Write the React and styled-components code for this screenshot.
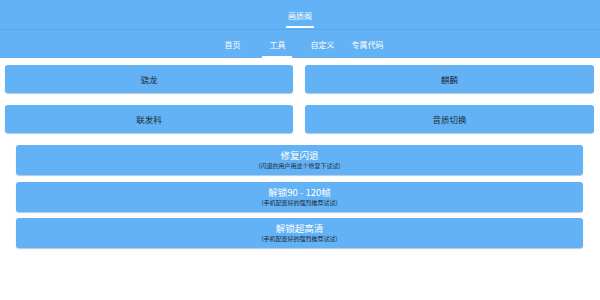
import styled, { createGlobalStyle } from "styled-components";

const GlobalStyle = createGlobalStyle`
  body {
    margin: 0;
    background: #ffffff;
    font-family: "Noto Sans CJK SC", "Noto Sans", Roboto, sans-serif;
  }
`;

const tabs = ["首页", "工具", "自定义", "专属代码"];

const topButtons = ["骁龙", "麒麟", "联发科", "音质切换"];

const tools = [
  { title: "修复闪退", note: "(闪退的用户用这个修复下试试)" },
  { title: "解锁90 - 120帧", note: "(手机配置好的强烈推荐试试)" },
  { title: "解锁超高清", note: "(手机配置好的强烈推荐试试)" },
];

function App() {
  return (
    <Page>
      <GlobalStyle />
      <Header>
        <TitleBar>
          <Title>画质阁</Title>
        </TitleBar>
        <TabBar>
          {tabs.map((t) => (
            <Tab key={t} $active={t === "工具"}>
              {t}
            </Tab>
          ))}
        </TabBar>
      </Header>

      <Grid>
        {topButtons.map((b) => (
          <SmallButton key={b}>{b}</SmallButton>
        ))}
      </Grid>

      <List>
        {tools.map((item) => (
          <WideButton key={item.title}>
            <WideTitle>{item.title}</WideTitle>
            <WideNote>{item.note}</WideNote>
          </WideButton>
        ))}
      </List>
    </Page>
  );
}

const Page = styled.div`
  width: 600px;
  height: 300px;
  background: #ffffff;
  overflow: hidden;
`;

const Header = styled.div`
  background: #62b2f5;
`;

const TitleBar = styled.div`
  height: 29px;
  display: flex;
  justify-content: center;
  align-items: flex-end;
  border-bottom: 1px solid #58a7e8;
`;

const Title = styled.div`
  color: #ffffff;
  font-size: 8px;
  line-height: 12px;
  padding-bottom: 7px;
  position: relative;
  &::after {
    content: "";
    position: absolute;
    left: 50%;
    bottom: 1px;
    width: 28px;
    margin-left: -14px;
    height: 2px;
    background: #ffffff;
  }
`;

const TabBar = styled.div`
  height: 28px;
  display: flex;
  justify-content: center;
`;

const Tab = styled.div`
  width: 45px;
  display: flex;
  align-items: center;
  justify-content: center;
  color: #ffffff;
  font-size: 8px;
  position: relative;
  &::after {
    content: "";
    display: ${(p) => (p.$active ? "block" : "none")};
    position: absolute;
    bottom: 0;
    left: 7px;
    width: 30px;
    height: 2px;
    background: #ffffff;
  }
`;

const Grid = styled.div`
  display: grid;
  grid-template-columns: 288px 289px;
  column-gap: 12px;
  row-gap: 12px;
  padding: 7px 6px 0 5px;
`;

const SmallButton = styled.div`
  height: 28px;
  background: #62b2f5;
  border-radius: 3px;
  box-shadow: 0 1px 1px rgba(40, 100, 160, 0.35);
  display: flex;
  align-items: center;
  justify-content: center;
  color: #1f2a36;
  font-size: 8.5px;
`;

const List = styled.div`
  display: flex;
  flex-direction: column;
  gap: 6.5px;
  padding: 12px 17px 0 16px;
`;

const WideButton = styled.div`
  height: 30px;
  background: #62b2f5;
  border-radius: 3px;
  box-shadow: 0 1px 1px rgba(40, 100, 160, 0.35);
  display: flex;
  flex-direction: column;
  align-items: center;
  justify-content: center;
`;

const WideTitle = styled.div`
  color: #ffffff;
  font-size: 9.5px;
  line-height: 12px;
`;

const WideNote = styled.div`
  color: #1f2a36;
  font-size: 6px;
  line-height: 10px;
`;

export default App;
